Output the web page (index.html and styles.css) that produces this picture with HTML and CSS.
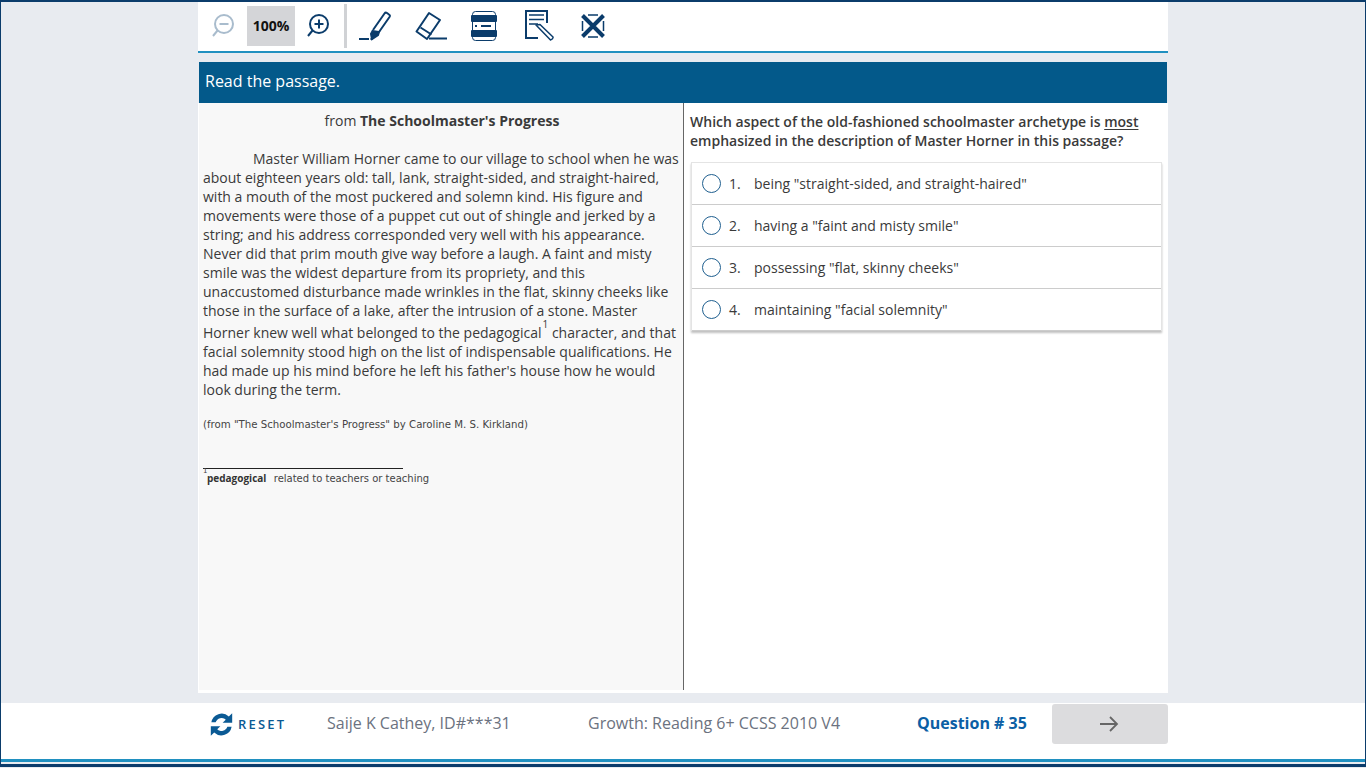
FILE: index.html
```html
<!DOCTYPE html>
<html lang="en">
<head>
    <meta charset="UTF-8">
    <title>Reading Test</title>
    <link rel="stylesheet" href="styles.css">
</head>
<body>
    <div class="frame">
        <div class="main">
            <!-- Toolbar -->
            <div class="toolbar">
                <div class="zoom-tools">
                    <svg class="zoom-out" width="26" height="26" viewBox="0 0 26 26" fill="none" stroke="#a9bccd" stroke-width="2">
                        <circle cx="14" cy="11" r="9"/>
                        <path d="M9.500 11h9M7.500 17.500L3 23" />
                    </svg>
                    <div class="zoom-value">100%</div>
                    <svg class="zoom-in" width="26" height="26" viewBox="0 0 26 26" fill="none" stroke="#0b3c6b" stroke-width="2">
                        <circle cx="14" cy="11" r="9"/>
                        <path d="M9.500 11h9M14 6.500v9M7.500 17.500L3 23" />
                    </svg>
                </div>
                <div class="tool-divider"></div>
                <div class="tools">
                    <svg class="tool-pen" width="32" height="30" viewBox="0 0 32 30" fill="none" stroke="#0b3c6b" stroke-width="2">
                        <path d="M0 28h10M11.500 28h2" />
                        <path d="M14 19L25.500 2.500Q26.500 1 28 2L30 3.500Q31.500 4.500 30.500 6L20 21" stroke-linejoin="round"/>
                        <path d="M13.500 20l6.500 1-1 3-6 4-1-5z" fill="#0b3c6b"/>
                    </svg>
                    <svg class="tool-eraser" width="32" height="30" viewBox="0 0 32 30" fill="none" stroke="#0b3c6b" stroke-width="2">
                        <path d="M14 2L25 9 12 28 1.500 20.500z" stroke-linejoin="round"/>
                        <path d="M5.500 16.500l11 7M14 27.500h18" />
                    </svg>
                    <svg class="tool-stack" width="26" height="30" viewBox="0 0 26 30" fill="none">
                        <rect x="1.500" y="0.500" width="23" height="29" rx="3" stroke="#0b3c6b" stroke-width="1"/>
                        <rect x="0" y="4" width="26" height="7" rx="1" fill="#0b3c6b"/>
                        <rect x="0" y="19" width="26" height="7" rx="1" fill="#0b3c6b"/>
                        <path d="M4 15h2M10 15h10" stroke="#0b3c6b" stroke-width="2"/>
                    </svg>
                    <svg class="tool-note" width="30" height="32" viewBox="0 0 30 32" fill="none" stroke="#0b3c6b" stroke-width="2">
                        <path d="M23 13V1H2v27h12" />
                        <path d="M5 5h15M5 9.500h15M5 14h9" stroke-width="1.500"/>
                        <path d="M12 15l4-.5 13 12.500q.5 2-2.500 3L12 15z" stroke-width="1.500" stroke-linejoin="round"/>
                    </svg>
                    <svg class="tool-cross" width="24" height="24" viewBox="0 0 24 24" fill="none" stroke="#0b3c6b">
                        <path d="M1.500 1.500l21 21M22.500 1.500l-21 21" stroke-width="4"/>
                        <path d="M7 1h10M7 23h10M1.500 7v10M22.500 7v10" stroke-width="1.500"/>
                    </svg>
                </div>
            </div>

            <div class="instruction">Read the passage.</div>

            <div class="content">
                <!-- Passage -->
                <div class="passage">
                    <p class="passage-title">from <b>The Schoolmaster's Progress</b></p>
                    <p class="passage-text">Master William Horner came to our village to school when he was about eighteen years old: tall, lank, straight-sided, and straight-haired, with a mouth of the most puckered and solemn kind. His figure and movements were those of a puppet cut out of shingle and jerked by a string; and his address corresponded very well with his appearance. Never did that prim mouth give way before a laugh. A faint and misty smile was the widest departure from its propriety, and this unaccustomed disturbance made wrinkles in the flat, skinny cheeks like those in the surface of a lake, after the intrusion of a stone. Master Horner knew well what belonged to the pedagogical<sup class="note-ref">1</sup> character, and that facial solemnity stood high on the list of indispensable qualifications. He had made up his mind before he left his father's house how he would look during the term.</p>
                    <p class="source">(from "The Schoolmaster's Progress" by Caroline M. S. Kirkland)</p>
                    <div class="footnote">
                        <span class="footnote-num">1</span><b>pedagogical</b>&nbsp;&nbsp;related to teachers or teaching
                    </div>
                </div>

                <!-- Question -->
                <div class="question">
                    <p class="question-text">Which aspect of the old-fashioned schoolmaster archetype is <u>most</u> emphasized in the description of Master Horner in this passage?</p>
                    <div class="answers">
                        <div class="answer"><span class="radio"></span><span class="answer-num">1.</span><span>being "straight-sided, and straight-haired"</span></div>
                        <div class="answer"><span class="radio"></span><span class="answer-num">2.</span><span>having a "faint and misty smile"</span></div>
                        <div class="answer"><span class="radio"></span><span class="answer-num">3.</span><span>possessing "flat, skinny cheeks"</span></div>
                        <div class="answer"><span class="radio"></span><span class="answer-num">4.</span><span>maintaining "facial solemnity"</span></div>
                    </div>
                </div>
            </div>
        </div>

        <!-- Footer -->
        <div class="footer">
            <div class="footer-inner">
                <div class="reset">
                    <svg width="27" height="27" viewBox="0 0 24 24" fill="#0b5a94">
                        <path d="M3 10A9.300 9.300 0 0 1 18.500 4.800L21.500 2V10.500H13L15.800 7.700A5.600 5.600 0 0 0 6.800 10Z"/>
                        <path d="M21 14A9.300 9.300 0 0 1 5.500 19.200L2.500 22V13.500H11L8.200 16.300A5.600 5.600 0 0 0 17.200 14Z"/>
                    </svg>
                    <span>RESET</span>
                </div>
                <div class="student">Saije K Cathey, ID#***31</div>
                <div class="test-name">Growth: Reading 6+ CCSS 2010 V4</div>
                <div class="question-num">Question # 35</div>
                <button class="next">
                    <svg width="20" height="16" viewBox="0 0 20 16" fill="none" stroke="#666" stroke-width="1.800">
                        <path d="M1 8h17M11 1l7 7-7 7"/>
                    </svg>
                </button>
            </div>
        </div>
    </div>
</body>
</html>
```

FILE: styles.css
```css
html, body {
    margin: 0;
    height: 100%;
}

body {
    font-family: "Open Sans", sans-serif;
    color: #3a3a3a;
    background-color: #e8ebf0;
    overflow: hidden;
}

p {
    margin: 0;
}

.frame {
    height: 767px;
    box-sizing: border-box;
    border: 1px solid #0b3c6b;
    border-top-width: 2px;
    border-bottom-width: 3px;
    display: flex;
    flex-direction: column;
}

.main {
    width: 970px;
    margin-left: 197px;
    flex: 1;
    display: flex;
    flex-direction: column;
}

.toolbar {
    height: 48px;
    padding-bottom: 1px;
    background-color: #fff;
    border-bottom: 2px solid #2090c0;
    display: flex;
    align-items: center;
    flex-shrink: 0;
}

.zoom-tools {
    display: flex;
    align-items: center;
    width: 146px;
}

.zoom-out {
    margin-left: 12px;
}

.zoom-value {
    width: 48px;
    height: 40px;
    margin-left: 11px;
    margin-right: 10px;
    background-color: #d4d5d8;
    color: #111;
    font-size: 14px;
    font-weight: 700;
    line-height: 40px;
    text-align: center;
}

.tool-divider {
    width: 3px;
    height: 44px;
    background-color: #d0d2d5;
}

.tools {
    display: flex;
    align-items: center;
    margin-left: 12px;
}

.tool-eraser {
    margin-left: 24px;
}

.tool-stack {
    margin-left: 24px;
}

.tool-note {
    margin-left: 27px;
}

.tool-cross {
    margin-left: 27px;
}

.instruction {
    height: 41px;
    margin: 9px 1px 0;
    padding-left: 6px;
    background-color: #03598a;
    color: #fff;
    font-size: 16px;
    line-height: 38px;
    flex-shrink: 0;
}

.content {
    display: flex;
    height: 587px;
    padding-bottom: 3px;
    background-color: #fff;
    flex-shrink: 0;
}

.passage {
    width: 486px;
    margin-left: 1px;
    box-sizing: border-box;
    padding: 8px 4px 0;
    background-color: #f8f8f8;
    border-right: 1px solid #666;
    font-size: 14px;
    line-height: 19px;
}

.passage-title {
    text-align: center;
    padding-left: 2px;
}

.passage-text {
    margin-top: 19px;
    text-indent: 50px;
}

.note-ref {
    font-size: 10px;
    line-height: 8px;
    vertical-align: 10px;
    margin-left: 1px;
}

.source {
    margin-top: 16px;
    font-family: "DejaVu Sans", sans-serif;
    font-size: 10.200px;
    line-height: 19px;
    color: #444;
}

.footnote {
    position: relative;
    width: 200px;
    box-sizing: border-box;
    margin-top: 34px;
    padding-left: 4px;
    border-top: 1px solid #222;
    font-family: "DejaVu Sans", sans-serif;
    font-size: 10px;
    line-height: 18px;
    white-space: nowrap;
    color: #444;
}

.footnote b {
    font-family: "Open Sans", sans-serif;
    margin-right: 1px;
    color: #333;
}

.footnote-num {
    position: absolute;
    left: 0;
    top: -1px;
    font-size: 7px;
    line-height: 7px;
}

.question {
    flex: 1;
    padding: 9px 6px 0;
    font-size: 14px;
    line-height: 19px;
}

.question-text {
    font-weight: 600;
}

.question-text u {
    text-underline-offset: 2px;
}

.answers {
    margin-top: 12px;
    margin-left: 1px;
    width: 469px;
    background-color: #fff;
    border: 1px solid #e4e4e4;
    border-bottom: none;
    box-shadow: 0 2px 2px rgba(0, 0, 0, 0.25);
}

.answer {
    height: 41px;
    display: flex;
    align-items: center;
    border-bottom: 1px solid #ccc;
    padding-left: 10px;
}

.radio {
    width: 17px;
    height: 17px;
    border: 1.500px solid #1f5f8f;
    border-radius: 50%;
    margin-right: 8px;
    flex-shrink: 0;
}

.answer-num {
    width: 25px;
}

.footer {
    height: 56px;
    margin-bottom: 2px;
    background-color: #fff;
    border-bottom: 3px solid #2090c0;
    flex-shrink: 0;
}

.footer-inner {
    width: 970px;
    margin-left: 197px;
    height: 40px;
    padding-top: 1px;
    display: flex;
    align-items: center;
}

.reset {
    display: flex;
    align-items: center;
    margin-left: 10px;
    gap: 3px;
    color: #0b5a94;
    font-size: 13px;
    font-weight: 600;
    letter-spacing: 2.200px;
    width: 119px;
}

.student, .test-name {
    color: #6b7280;
    font-size: 16px;
    margin-bottom: 2px;
}

.student {
    width: 261px;
}

.test-name {
    width: 329px;
}

.question-num {
    color: #0b5fa5;
    font-size: 16px;
    font-weight: 700;
    width: 135px;
    margin-bottom: 2px;
}

.next {
    width: 116px;
    height: 40px;
    border: none;
    border-radius: 3px;
    background-color: #dcdcde;
    padding: 0 2px 0 0;
    display: flex;
    align-items: center;
    justify-content: center;
}
```
